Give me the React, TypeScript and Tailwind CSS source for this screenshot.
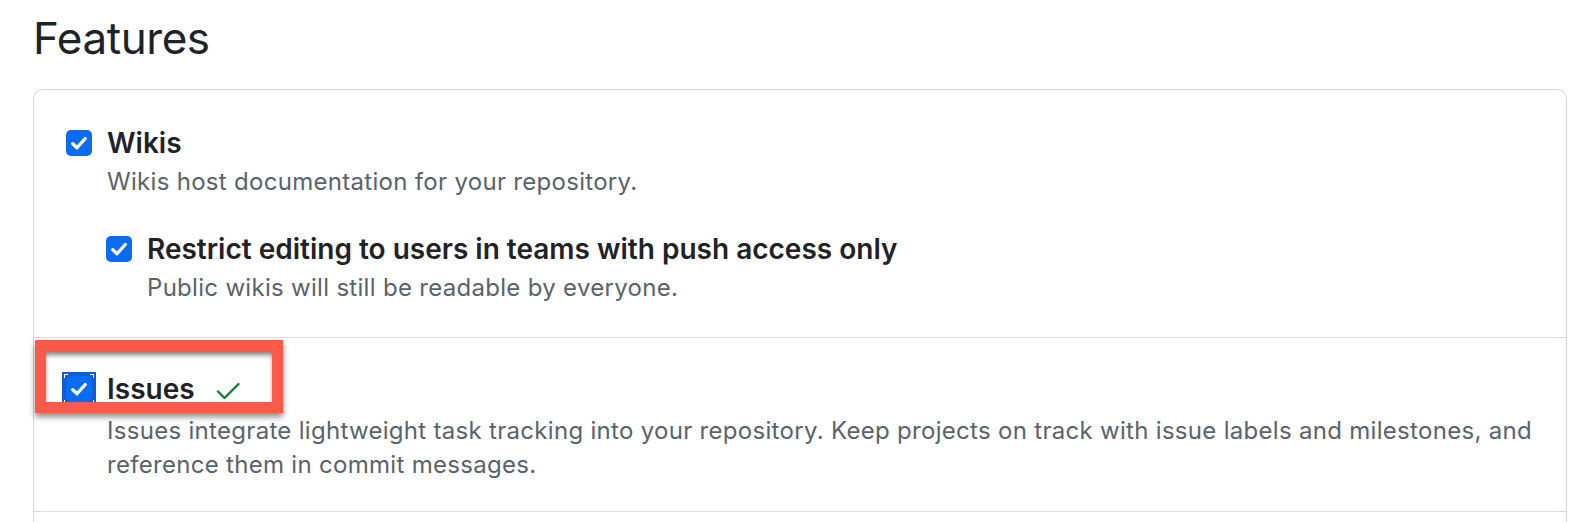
import React from 'react';

const font = { fontFamily: 'Inter, "Noto Sans", sans-serif' };

const Checkbox: React.FC<{ focused?: boolean }> = ({ focused }) => {
  const box = (
    <span className="flex h-[26px] w-[26px] items-center justify-center rounded-[5px] bg-[#0a6cf2]">
      <svg viewBox="0 0 16 16" className="h-[20px] w-[20px]" fill="none">
        <path d="M3 8.6 6.4 11.8 13 4.4" stroke="#fff" strokeWidth="2.7" strokeLinecap="round" strokeLinejoin="round" />
      </svg>
    </span>
  );
  if (!focused) return box;
  return (
    <span className="relative flex h-[34px] w-[34px] items-center justify-center bg-[#0a5fd6]">
      {box}
      {/* focus ring corner marks */}
      <span className="absolute left-[2px] top-[2px] h-[4px] w-[4px] border-l border-t border-white" />
      <span className="absolute right-[2px] top-[2px] h-[4px] w-[4px] border-r border-t border-white" />
      <span className="absolute bottom-[2px] left-[2px] h-[4px] w-[4px] border-b border-l border-white" />
      <span className="absolute bottom-[2px] right-[2px] h-[4px] w-[4px] border-b border-r border-white" />
    </span>
  );
};

const Option: React.FC<{
  title: string;
  desc: string;
  focused?: boolean;
  saved?: boolean;
}> = ({ title, desc, focused, saved }) => (
  <div className="flex gap-[15px]">
    <div className={`flex h-[36px] items-center ${focused ? '-mx-[4px]' : ''}`}>
      <Checkbox focused={focused} />
    </div>
    <div className="flex-1">
      <div className="flex h-[36px] items-center gap-[21px]">
        <span className="text-[28px] font-semibold text-[#1f2328]">{title}</span>
        {saved && (
          <svg viewBox="0 0 24 24" className="mt-[4px] h-[24px] w-[24px]" fill="none">
            <path d="M2 12.5 8.5 19 22.5 5" stroke="#1a7f37" strokeWidth="2.4" strokeLinecap="round" strokeLinejoin="round" />
          </svg>
        )}
      </div>
      <p className={`${saved ? 'mt-[7px]' : 'mt-[4px]'} text-[24px] leading-[34px] tracking-[0.3px] text-[#59636e]`}>{desc}</p>
    </div>
  </div>
);

export default function App() {
  return (
    <div className="relative h-[522px] w-[1586px] overflow-hidden bg-white" style={font}>
      <div className="pl-[33px] pr-[19px] pt-[10px]">
        <h1 className="text-[44px] font-normal leading-[56px] tracking-[-0.01em] text-[#1f2328]">Features</h1>
        <div className="mt-[23px] rounded-[10px] border border-[#d1d9e0]">
          <div className="px-[32px] pb-[32px] pt-[35px]">
            <Option title="Wikis" desc="Wikis host documentation for your repository." />
            <div className="mt-[32px] pl-[40px]">
              <Option
                title="Restrict editing to users in teams with push access only"
                desc="Public wikis will still be readable by everyone."
              />
            </div>
          </div>
          <div className="border-t border-[#d8dee4] px-[32px] pb-[29px] pt-[33px]">
            <Option
              title="Issues"
              focused
              saved
              desc="Issues integrate lightweight task tracking into your repository. Keep projects on track with issue labels and milestones, and reference them in commit messages."
            />
          </div>
          <div className="h-[120px] border-t border-[#d8dee4]" />
        </div>
      </div>

      {/* annotation highlight */}
      <div className="absolute left-[35px] top-[340px] h-[73px] w-[248px] border-[11px] border-[#fb5a4a] shadow-[0_4px_6px_rgba(0,0,0,0.45),inset_0_5px_5px_-1px_rgba(0,0,0,0.5)]" />
    </div>
  );
}
